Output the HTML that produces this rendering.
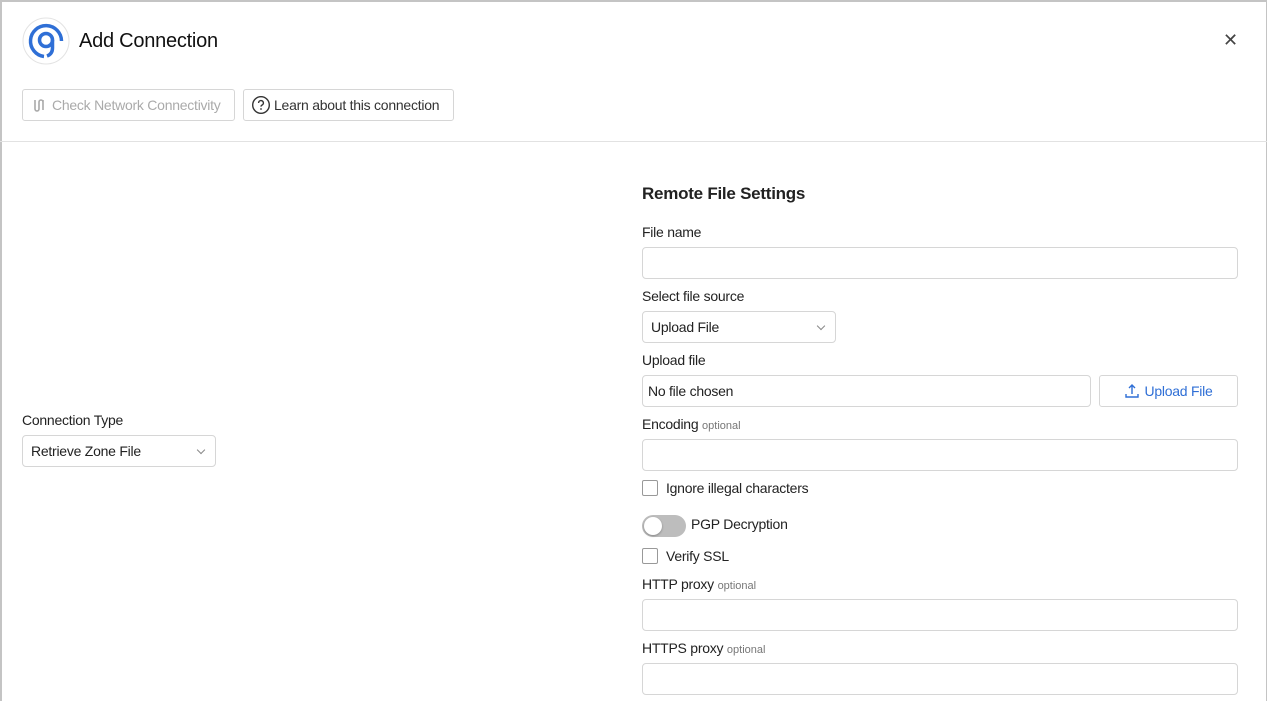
<!DOCTYPE html>
<html><head><meta charset="utf-8"><style>
*{box-sizing:border-box;margin:0;padding:0}
body{width:1267px;height:701px;overflow:hidden;background:#fff;font-family:"Liberation Sans",sans-serif;color:#222;position:relative;letter-spacing:-0.25px}
.frame{position:absolute;left:0;top:0;width:1267px;height:701px;border:2px solid #c4c4c4;border-bottom:none;border-right:1px solid #c4c4c4}
.a{position:absolute}
.lbl{font-size:14px;color:#222}
.opt{font-size:11px;color:#777;letter-spacing:0}
.inp{position:absolute;border:1px solid #d6d6d6;border-radius:4px;background:#fff}
.btn{position:absolute;border:1px solid #d6d6d6;border-radius:3px;font-size:14px;display:flex;align-items:center}
.cb{position:absolute;width:16px;height:16px;border:1px solid #999;border-radius:2px}
.sel{font-size:14px;padding-left:8px;display:flex;align-items:center}
.chev{position:absolute;right:11px;top:11px;width:6px;height:6px;border-right:1px solid #888;border-bottom:1px solid #888;transform:rotate(45deg)}
</style></head><body>
<div class="frame"></div>
<svg class="a" style="left:22px;top:17px" width="48" height="48" viewBox="0 0 48 48">
<circle cx="24" cy="24" r="23" fill="#fff" stroke="#e3e3e3"/>
<path d="M22 39.5 A15.5 15.5 0 1 1 39.5 24" fill="none" stroke="#2f6fd6" stroke-width="3.5"/>
<circle cx="24" cy="23" r="6.5" fill="none" stroke="#2f6fd6" stroke-width="3.5"/>
<path d="M30.5 23 V31 Q30.5 37 25 39" fill="none" stroke="#2f6fd6" stroke-width="3.5"/>
</svg>
<div class="a" style="left:79px;top:30px;font-size:20px;color:#111">Add Connection</div>
<div class="a" style="left:1223px;top:30px;font-size:18px;color:#444">✕</div>
<div class="btn" style="left:22px;top:89px;width:213px;height:32px;color:#aaa;padding-left:8px">
<svg width="16" height="16" viewBox="0 0 16 16" style="margin-right:5px"><path d="M4 3v9M4 12a2 2 0 0 0 4 0V5a2 2 0 0 1 4 0v8M12 3v2" stroke="#aaa" stroke-width="1.6" fill="none"/></svg>Check Network Connectivity</div>
<div class="btn" style="left:243px;top:89px;width:211px;height:32px;color:#333;padding-left:7px">
<svg width="20" height="20" viewBox="0 0 20 20" style="margin-right:3px"><circle cx="10" cy="10" r="8.3" fill="none" stroke="#333" stroke-width="1.4"/><path d="M7.6 8a2.4 2.4 0 1 1 3.2 2.2c-.6.3-.8.7-.8 1.4" fill="none" stroke="#333" stroke-width="1.4"/><circle cx="10" cy="14" r=".9" fill="#333"/></svg>Learn about this connection</div>
<div class="a" style="left:0;top:141px;width:1267px;height:1px;background:#e2e2e2"></div>

<div class="a lbl" style="left:22px;top:412px">Connection Type</div>
<div class="inp sel" style="left:22px;top:435px;width:194px;height:32px">Retrieve Zone File<span class="chev"></span></div>

<div class="a" style="left:642px;top:184px;font-size:17px;font-weight:bold;color:#222">Remote File Settings</div>
<div class="a lbl" style="left:642px;top:224px">File name</div>
<div class="inp" style="left:642px;top:247px;width:596px;height:32px"></div>
<div class="a lbl" style="left:642px;top:288px">Select file source</div>
<div class="inp sel" style="left:642px;top:311px;width:194px;height:32px">Upload File<span class="chev"></span></div>
<div class="a lbl" style="left:642px;top:352px">Upload file</div>
<div class="inp sel" style="left:642px;top:375px;width:449px;height:32px;padding-left:5px">No file chosen</div>
<div class="btn" style="left:1099px;top:375px;width:139px;height:32px;color:#2f6fd6;justify-content:center">
<svg width="16" height="16" viewBox="0 0 16 16" style="margin-right:4px"><path d="M8 2v9M5 5l3-3 3 3M2 11v3h12v-3" stroke="#2f6fd6" stroke-width="1.4" fill="none"/></svg>Upload File</div>
<div class="a lbl" style="left:642px;top:416px">Encoding <span class="opt">optional</span></div>
<div class="inp" style="left:642px;top:439px;width:596px;height:32px"></div>
<div class="cb" style="left:642px;top:480px"></div>
<div class="a lbl" style="left:666px;top:480px">Ignore illegal characters</div>
<div class="a" style="left:642px;top:515px;width:44px;height:22px;border-radius:11px;background:#bdbdbd"></div>
<div class="a" style="left:644px;top:517px;width:18px;height:18px;border-radius:9px;background:#fff;box-shadow:0 1px 2px rgba(0,0,0,.3)"></div>
<div class="a lbl" style="left:691px;top:516px">PGP Decryption</div>
<div class="cb" style="left:642px;top:548px"></div>
<div class="a lbl" style="left:666px;top:548px">Verify SSL</div>
<div class="a lbl" style="left:642px;top:576px">HTTP proxy <span class="opt">optional</span></div>
<div class="inp" style="left:642px;top:599px;width:596px;height:32px"></div>
<div class="a lbl" style="left:642px;top:640px">HTTPS proxy <span class="opt">optional</span></div>
<div class="inp" style="left:642px;top:663px;width:596px;height:32px"></div>
</body></html>
